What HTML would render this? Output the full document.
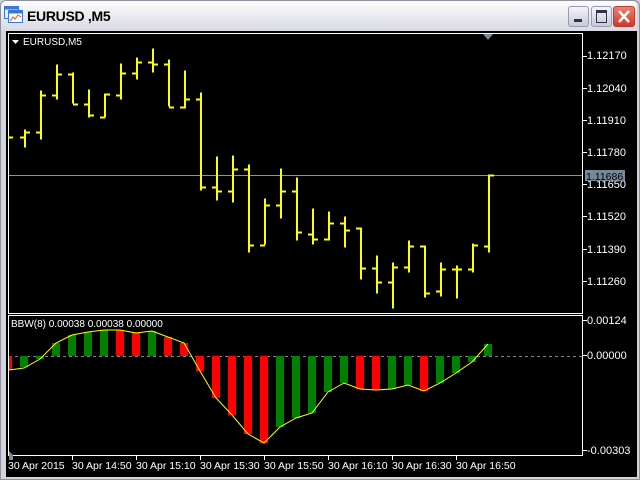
<!DOCTYPE html>
<html><head><meta charset="utf-8"><style>
html,body{margin:0;padding:0;width:640px;height:480px;overflow:hidden;background:#cfcfd8;font-family:"Liberation Sans",sans-serif}
.win{position:absolute;left:0;top:0;width:638px;height:478px;border:1px solid #8f8fa0;border-radius:6px 6px 0 0;background:#d4d4dc}
.title{position:absolute;left:1px;top:1px;width:636px;height:30px;border-radius:5px 5px 0 0;background:linear-gradient(#fdfdfe,#eeeef3 40%,#d9d9e2)}
.tt{position:absolute;left:27px;top:8px;font-size:14px;font-weight:bold;color:#000;letter-spacing:-0.3px}
.btn{position:absolute;top:6px;width:19px;height:19px;border:1px solid #9a9ab0;border-radius:3px;background:linear-gradient(#f4f4fa,#c8c8d8)}
</style></head><body>
<div class="win"></div>
<div class="title"></div>
<svg style="position:absolute;left:4px;top:6px" width="20" height="18">
<rect x="0.5" y="0.5" width="14" height="12" fill="#e8f0ff" stroke="#3a78d8"/><rect x="0.5" y="0.5" width="14" height="3" fill="#3a78d8"/>
<rect x="4.5" y="4.5" width="14" height="12" fill="#fff" stroke="#3a78d8"/><rect x="4.5" y="4.5" width="14" height="3" fill="#3a78d8"/>
<path d="M6 15 L9 11 L11 13 L14 9 L17 11" stroke="#e05020" fill="none"/></svg>
<div class="tt">EURUSD ,M5</div>
<div class="btn" style="left:568px"><div style="position:absolute;left:5px;top:12px;width:8px;height:3px;background:#303048"></div></div>
<div class="btn" style="left:591px"><div style="position:absolute;left:4px;top:3px;width:9px;height:9px;border:1px solid #303048;border-top-width:3px"></div></div>
<div class="btn" style="left:613px;width:20px;background:linear-gradient(#f08070,#d03828);border-color:#b04030"><svg width="20" height="19"><path d="M5 4 L15 15 M15 4 L5 15" stroke="#fff" stroke-width="2.5"/></svg></div>
<svg style="position:absolute;left:0;top:0" width="640" height="480" font-family="Liberation Sans, sans-serif" font-size="11">
<rect x="6" y="31" width="631" height="446" fill="#000"/>
<rect x="8.5" y="33.5" width="574" height="280" fill="none" stroke="#fff"/>
<rect x="8.5" y="315.5" width="574" height="140" fill="none" stroke="#fff"/>
<path d="M483 34 L493 34 L488 40 Z" fill="#778899"/>
<path d="M12 40 L19 40 L15.5 44 Z" fill="#fff"/>
<text x="23" y="45" fill="#fff" font-size="10">EURUSD,M5</text>
<line x1="9" y1="175.5" x2="582" y2="175.5" stroke="#8a939c"/>
<g stroke="#ffff00" stroke-width="2" fill="none" transform="translate(0,0.5)">
<path d="M8 137H13"/>
<path d="M25 129V147M20 137H25M25 132H30"/>
<path d="M41 90V139M36 132H41M41 95H46"/>
<path d="M57 64V99M52 95H57M57 74H62"/>
<path d="M73 72V103M68 74H73M73 104H78"/>
<path d="M89 89V117M84 104H89M89 115H94"/>
<path d="M105 93V117M100 117H105M105 94H110"/>
<path d="M121 63V99M116 95H121M121 73H126"/>
<path d="M137 57V79M132 73H137M137 62H142"/>
<path d="M153 48V72M148 62H153M153 64H158"/>
<path d="M169 59V106M164 64H169M169 107H174"/>
<path d="M185 70V108M180 107H185M185 99H190"/>
<path d="M201 92V190M196 99H201M201 187H206"/>
<path d="M217 156V200M212 187H217M217 191H222"/>
<path d="M233 155V202M228 191H233M233 169H238"/>
<path d="M249 164V252M244 169H249M249 245H254"/>
<path d="M265 198V244M260 245H265M265 205H270"/>
<path d="M281 168V218M276 205H281M281 191H286"/>
<path d="M297 177V240M292 191H297M297 232H302"/>
<path d="M313 208V244M308 234H313M313 239H318"/>
<path d="M329 211V240M324 239H329M329 223H334"/>
<path d="M345 216V247M340 223H345M345 230H350"/>
<path d="M361 227V279M356 228H361M361 268H366"/>
<path d="M377 255V293M372 268H377M377 282H382"/>
<path d="M393 262V308M388 282H393M393 267H398"/>
<path d="M409 240V272M404 267H409M409 246H414"/>
<path d="M425 245V297M420 246H425M425 293H430"/>
<path d="M441 262V296M436 291H441M441 269H446"/>
<path d="M457 265V298M452 269H457M457 269H462"/>
<path d="M473 243V272M468 269H473M473 245H478"/>
<path d="M489 174V252M484 246H489M489 175H494"/>
</g>
<g fill="#fff">
<text x="587" y="59">1.12170</text><text x="587" y="92">1.12040</text><text x="587" y="124">1.11910</text><text x="587" y="156">1.11780</text><text x="587" y="188">1.11650</text><text x="587" y="220">1.11520</text><text x="587" y="253">1.11390</text><text x="587" y="285">1.11260</text>
<text x="587" y="324">0.00124</text><text x="587" y="359">0.00000</text><text x="587" y="454">-0.00303</text>
</g>
<g stroke="#fff"><path d="M583 56.5H587M583 88.5H587M583 120.5H587M583 152.5H587M583 184.5H587M583 216.5H587M583 249.5H587M583 281.5H587M583 320.5H587M583 355.5H587M583 450.5H587"/></g>
<rect x="585" y="170" width="40" height="11" fill="#778899"/>
<text x="586" y="180" fill="#000" font-size="10.5">1.11686</text>
<line x1="9" y1="356.5" x2="582" y2="356.5" stroke="#778899" stroke-dasharray="3,3"/>
<g fill="#ff0000">
<rect x="9" y="356" width="3" height="14"/>
<rect x="116" y="330" width="8" height="26"/><rect x="132" y="333" width="8" height="23"/>
<rect x="164" y="337" width="8" height="19"/><rect x="180" y="343" width="8" height="13"/>
<rect x="196" y="356" width="8" height="15"/><rect x="212" y="356" width="8" height="42"/>
<rect x="228" y="356" width="8" height="59"/><rect x="244" y="356" width="8" height="78"/>
<rect x="260" y="356" width="8" height="87"/>
<rect x="356" y="356" width="8" height="33"/><rect x="372" y="356" width="8" height="34"/>
<rect x="420" y="356" width="8" height="35"/>
</g>
<g fill="#008000">
<rect x="20" y="356" width="8" height="11"/><rect x="36" y="356" width="8" height="3"/>
<rect x="52" y="343" width="8" height="13"/><rect x="68" y="335" width="8" height="21"/>
<rect x="84" y="332" width="8" height="24"/><rect x="100" y="330" width="8" height="26"/>
<rect x="148" y="331" width="8" height="25"/>
<rect x="276" y="356" width="8" height="71"/><rect x="292" y="356" width="8" height="62"/>
<rect x="308" y="356" width="8" height="57"/><rect x="324" y="356" width="8" height="36"/>
<rect x="340" y="356" width="8" height="27"/>
<rect x="388" y="356" width="8" height="33"/><rect x="404" y="356" width="8" height="29"/>
<rect x="436" y="356" width="8" height="27"/><rect x="452" y="356" width="8" height="17"/>
<rect x="468" y="356" width="8" height="6"/><rect x="484" y="344" width="8" height="12"/>
</g>
<polyline fill="none" stroke="#ffff00" points="9,370 24,368 40,359 56,343 72,335 88,332 104,330 120,330 136,333 152,331 168,337 184,343 200,371 216,398 232,415 248,434 264,443 280,427 296,418 312,413 328,392 344,383 360,389 376,390 392,389 408,385 424,391 440,383 456,373 472,362 488,344"/>
<text x="11" y="327" fill="#fff" font-size="10">BBW(8) 0.00038 0.00038 0.00000</text>
<path d="M9 460V451L13 455V460Z" fill="#778899"/>
<g stroke="#fff"><path d="M72.5 456V460M136.5 456V460M200.5 456V460M264.5 456V460M328.5 456V460M392.5 456V460M456.5 456V460"/></g>
<g fill="#fff" font-size="10.5">
<text x="8" y="469">30 Apr 2015</text><text x="72" y="469">30 Apr 14:50</text><text x="136" y="469">30 Apr 15:10</text><text x="200" y="469">30 Apr 15:30</text><text x="264" y="469">30 Apr 15:50</text><text x="328" y="469">30 Apr 16:10</text><text x="392" y="469">30 Apr 16:30</text><text x="456" y="469">30 Apr 16:50</text>
</g>
</svg>
</body></html>
